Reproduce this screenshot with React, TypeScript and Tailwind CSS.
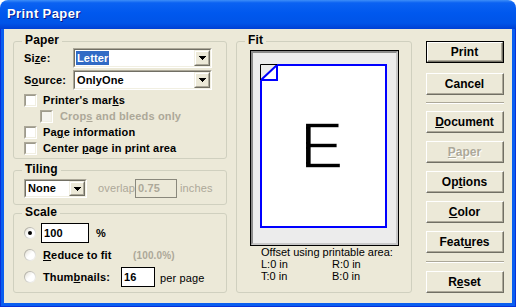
import type { ReactNode } from 'react';

function Group({ label, className, children }: { label: string; className: string; children?: ReactNode }) {
  return (
    <div className={`relative border border-[#d0d0bf] rounded-[3px] ${className}`}>
      <span className="absolute -top-[8px] left-[8px] px-[3px] bg-[#ece9d8] text-[12px] leading-[13px] font-bold">{label}</span>
      {children}
    </div>
  );
}

function ArrowBtn() {
  return (
    <div className="w-[16px] h-full shrink-0 border border-t-[#f1efe2] border-l-[#f1efe2] border-b-[#716f64] border-r-[#716f64]">
      <div className="h-full bg-[#ece9d8] border border-t-white border-l-white border-b-[#aca899] border-r-[#aca899] flex items-center justify-center">
        <svg width="7" height="4" viewBox="0 0 7 4" shapeRendering="crispEdges">
          <path d="M0 0h7v1h-1v1h-1v1h-1v1h-1v-1h-1v-1h-1v-1h-1z" fill="#000" />
        </svg>
      </div>
    </div>
  );
}

function Combo({ className, children }: { className: string; children: ReactNode }) {
  return (
    <div className={`shrink-0 border border-t-[#aca899] border-l-[#aca899] border-b-white border-r-white ${className}`}>
      <div className="h-full flex bg-white border border-t-[#716f64] border-l-[#716f64] border-b-[#f1efe2] border-r-[#f1efe2]">
        <div className="flex-1 flex items-center pl-[1px] font-bold">{children}</div>
        <ArrowBtn />
      </div>
    </div>
  );
}

function Check({ disabled }: { disabled?: boolean }) {
  return (
    <div className="w-[13px] h-[13px] shrink-0 border border-t-[#aca899] border-l-[#aca899] border-b-white border-r-white">
      <div
        className={`h-full border border-t-[#9d9a8c] border-l-[#9d9a8c] border-b-[#f1efe2] border-r-[#f1efe2] ${
          disabled ? 'bg-[#f4f3ee]' : 'bg-white'
        }`}
      />
    </div>
  );
}

function Radio({ on }: { on?: boolean }) {
  return (
    <div className="w-[12px] h-[12px] shrink-0 rounded-full bg-linear-to-br from-[#a3a196] to-white p-px">
      <div className="w-full h-full rounded-full bg-linear-to-br from-[#e2dfd3] via-white to-white flex items-center justify-center">
        {on && <div className="w-[4px] h-[4px] rounded-full bg-black" />}
      </div>
    </div>
  );
}

function Btn({ children, def, disabled }: { children: ReactNode; def?: boolean; disabled?: boolean }) {
  return (
    <div className={`h-[22px] w-[78px] shrink-0 ${def ? 'border border-black' : ''}`}>
      <div className="h-full border border-t-white border-l-white border-b-[#716f64] border-r-[#716f64]">
        <div
          className={`h-full border-b border-r border-b-[#aca899] border-r-[#aca899] flex items-center justify-center text-[12px] font-bold ${
            disabled ? 'text-[#aca899] [text-shadow:1px_1px_0_#fff]' : 'text-black'
          }`}
        >
          {children}
        </div>
      </div>
    </div>
  );
}

function Sep() {
  return <div className="w-[78px] h-[2px] border-t border-t-[#aca899] border-b border-b-white" />;
}

function PagePreview() {
  return (
    <svg width="127" height="164" viewBox="0 0 127 164" className="block">
      <polygon points="17,1 126,1 126,163 1,163 1,16" fill="#fff" stroke="#0000ff" strokeWidth="2" />
      <polyline points="1,16 17,16 17,1" fill="none" stroke="#0000ff" strokeWidth="2" />
      <polyline points="0.5,16 0.5,0.5 17,0.5" fill="none" stroke="#000" strokeWidth="1" />
      <text
        x="40"
        y="104"
        fontFamily="'Liberation Sans', Arial, sans-serif"
        fontSize="65"
        fill="#000"
        stroke="#fff"
        strokeWidth="1.4"
      >
        E
      </text>
    </svg>
  );
}

export default function App() {
  return (
    <div className="w-[516px] h-[307px] bg-white flex flex-col font-['Liberation_Sans',Arial,sans-serif] text-[11px] text-black select-none">
      <div className="h-[29px] shrink-0 rounded-t-[8px] bg-[linear-gradient(to_bottom,#3d8ef8_0%,#0b62f2_10%,#0058ee_45%,#0054e8_80%,#0040d4_100%)] flex items-center pl-[7px] pb-[2px]">
        <span className="text-white font-bold text-[13px] tracking-[0.4px] [text-shadow:1px_1px_#0a1a8a]">Print Paper</span>
      </div>

      <div className="flex-1 border-x border-b border-[#0831d9] bg-[#0a5ef0] px-[3px] pb-[3px]">
        <div className="h-full bg-[#ece9d8] flex pt-[12px] pl-[9px] tracking-[0.15px]">
          {/* left column */}
          <div className="w-[214px] flex flex-col">
            <Group label="Paper" className="h-[118px]">
              <div className="pt-[6px] pl-[10px] flex flex-col font-bold">
                <div className="flex items-center h-[20px]">
                  <span className="w-[49px]">
                    Si<u className="underline">z</u>e:
                  </span>
                  <Combo className="w-[139px] h-[20px]">
                    <span className="bg-[#316ac5] text-white px-[1px] leading-[14px]">Letter</span>
                  </Combo>
                </div>
                <div className="flex items-center h-[20px] mt-[2px]">
                  <span className="w-[49px]">
                    S<u className="underline">o</u>urce:
                  </span>
                  <Combo className="w-[139px] h-[20px]">
                    <span className="px-[1px]">OnlyOne</span>
                  </Combo>
                </div>
                <div className="mt-[2px] flex flex-col">
                  <div className="flex items-center h-[16px]">
                    <Check />
                    <span className="ml-[6px]">
                      Printer's mar<u className="underline">k</u>s
                    </span>
                  </div>
                  <div className="flex items-center h-[16px] pl-[16px] text-[#aca899]">
                    <Check disabled />
                    <span className="ml-[7px]">
                      Crop<u className="underline">s</u> and bleeds only
                    </span>
                  </div>
                  <div className="flex items-center h-[16px]">
                    <Check />
                    <span className="ml-[6px]">
                      Pa<u className="underline">g</u>e information
                    </span>
                  </div>
                  <div className="flex items-center h-[16px]">
                    <Check />
                    <span className="ml-[6px]">
                      Center <u className="underline">p</u>age in print area
                    </span>
                  </div>
                </div>
              </div>
            </Group>

            <Group label="Tiling" className="h-[35px] mt-[11px]">
              <div className="pt-[8px] pl-[10px] flex items-center">
                <Combo className="w-[63px] h-[19px]">
                  <span className="px-[1px]">None</span>
                </Combo>
                <span className="ml-[11px] w-[37px] text-[#aca899]">overlap</span>
                <div className="w-[42px] h-[19px] border border-[#8a887c] flex items-center pl-[2px] font-bold text-[#aca899]">
                  0.75
                </div>
                <span className="ml-[3px] text-[#aca899]">inches</span>
              </div>
            </Group>

            <Group label="Scale" className="h-[80px] mt-[8px]">
              <div className="pt-[8px] pl-[10px] flex flex-col font-bold">
                <div className="flex items-center h-[22px]">
                  <Radio on />
                  <div className="ml-[5px] w-[48px] h-[20px] border border-black bg-white flex items-center pl-[2px]">100</div>
                  <span className="ml-[7px]">%</span>
                </div>
                <div className="flex items-center h-[22px]">
                  <Radio />
                  <span className="ml-[7px] w-[90px]">
                    <u className="underline">R</u>educe to fit
                  </span>
                  <span className="text-[10px] text-[#aca899]">(100.0%)</span>
                </div>
                <div className="flex items-center h-[22px]">
                  <Radio />
                  <span className="ml-[7px] w-[78px]">
                    Thum<u className="underline">b</u>nails:
                  </span>
                  <div className="w-[34px] h-[20px] border border-black bg-white flex items-center pl-[2px]">16</div>
                  <span className="ml-[5px] font-normal pt-[3px]">per page</span>
                </div>
              </div>
            </Group>
          </div>

          {/* fit column */}
          <Group label="Fit" className="w-[176px] h-[252px] ml-[9px]">
            <div className="flex flex-col tracking-normal">
              <div className="ml-[13px] mt-[8px] w-[149px] h-[196px] border border-black">
                <div className="h-full border-2 border-t-[#8c8c8c] border-l-[#8c8c8c] border-b-[#c8c8c8] border-r-[#c8c8c8] bg-[#ececec] pl-[7px] pt-[11px]">
                  <PagePreview />
                </div>
              </div>
              <div className="ml-[24px] leading-[12px] text-[11px]">
                <div>Offset using printable area:</div>
                <div className="flex">
                  <span className="w-[71px]">L:0 in</span>
                  <span>R:0 in</span>
                </div>
                <div className="flex">
                  <span className="w-[71px]">T:0 in</span>
                  <span>B:0 in</span>
                </div>
              </div>
            </div>
          </Group>

          {/* buttons */}
          <div className="ml-[14px] flex flex-col tracking-normal">
            <Btn def>Print</Btn>
            <div className="mt-[10px]">
              <Btn>Cancel</Btn>
            </div>
            <div className="my-[7px]">
              <Sep />
            </div>
            <Btn>
              <u className="underline">D</u>ocument
            </Btn>
            <div className="mt-[8px] flex flex-col gap-[8px]">
              <Btn disabled>
                <u className="underline">P</u>aper
              </Btn>
              <Btn>
                Op<u className="underline">t</u>ions
              </Btn>
              <Btn>
                <u className="underline">C</u>olor
              </Btn>
              <Btn>
                Feat<u className="underline">u</u>res
              </Btn>
            </div>
            <div className="my-[8px]">
              <Sep />
            </div>
            <Btn>
              R<u className="underline">e</u>set
            </Btn>
          </div>
        </div>
      </div>
    </div>
  );
}
